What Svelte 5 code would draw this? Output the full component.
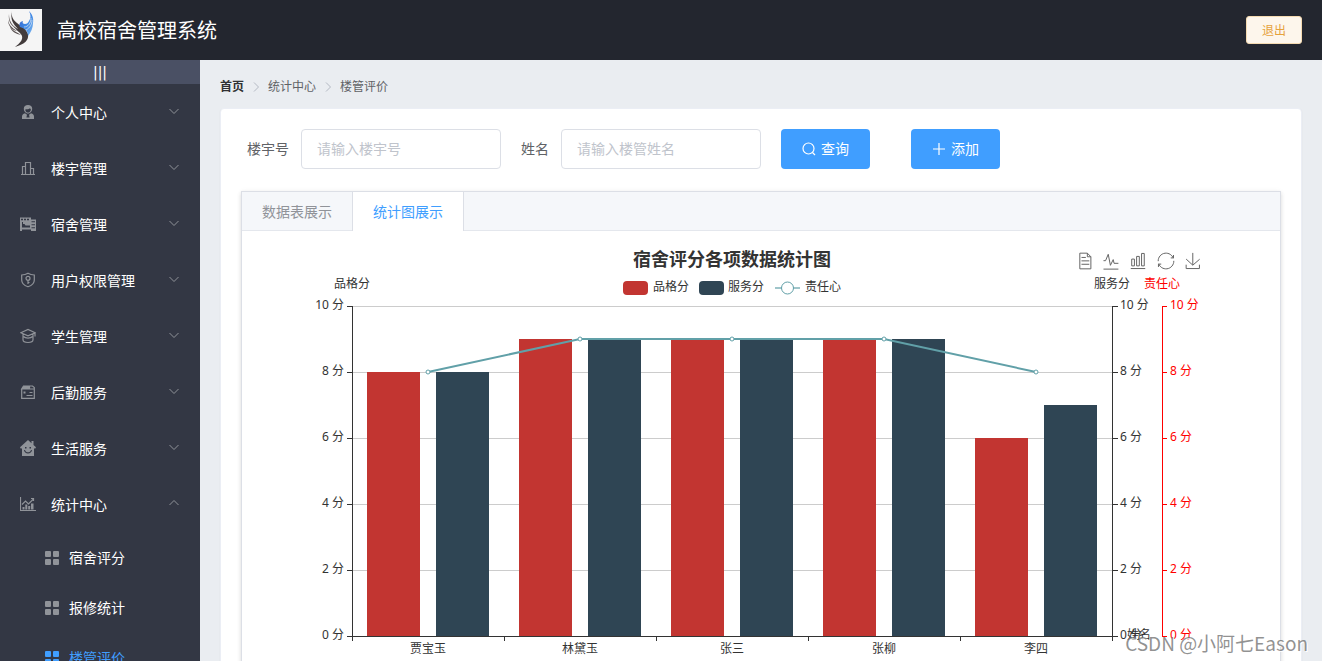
<script>
  const menus = [
    { label: '个人中心', icon: 'user' },
    { label: '楼宇管理', icon: 'building' },
    { label: '宿舍管理', icon: 'dorm' },
    { label: '用户权限管理', icon: 'shield' },
    { label: '学生管理', icon: 'student' },
    { label: '后勤服务', icon: 'logistics' },
    { label: '生活服务', icon: 'life' },
    {
      label: '统计中心',
      icon: 'stats',
      children: ['宿舍评分', '报修统计', '楼管评价']
    }
  ];
  const crumbs = ['统计中心', '楼管评价'];
  const tabs = ['数据表展示', '统计图展示'];

  let buildingNo = $state('');
  let managerName = $state('');
  let activeTab = $state('统计图展示');
  let activeItem = $state('楼管评价');

  const rows = [
    { name: '贾宝玉', character: 8, service: 8, duty: 8 },
    { name: '林黛玉', character: 9, service: 9, duty: 9 },
    { name: '张三', character: 9, service: 9, duty: 9 },
    { name: '张柳', character: 9, service: 9, duty: 9 },
    { name: '李四', character: 6, service: 7, duty: 8 }
  ];
  const ticks = [0, 2, 4, 6, 8, 10];
  const grid = { left: 95, right: 855, top: 60, bottom: 390 };
  const band = (grid.right - grid.left) / rows.length;
  const y = (v) => grid.bottom - (v * (grid.bottom - grid.top)) / 10;
  const cx = (i) => grid.left + band * (i + 0.5);
  const linePoints = rows.map((r, i) => `${cx(i)},${y(r.duty)}`).join(' ');

  const tools = [
    { x: 828, s: 0.28, title: '数据视图', d: 'M17.5,17.3H33M45.4,29.5h-28M11.5,2v56H51V14.8L38.4,2H11.5zM38.4,2.2v12.7H51M45.4,41.7h-28' },
    { x: 854, s: 0.29, title: '折线图', d: 'M4.1,28.9h7.1l9.3-22l7.4,38l9.7-19.7l3,12.8h14.9M4.1,58h51.4' },
    { x: 881, s: 0.27, title: '柱状图', d: 'M6.7,22.9h10V48h-10V22.9zM24.9,13h10v35h-10V13zM43.2,2h10v46h-10V2zM3.1,58h53.7' },
    { x: 909, s: 0.28, title: '还原', d: 'M47,18.9h9.8V8.7M56.3,20.1C52.1,9,40.5,0.6,26.8,2.1C12.6,3.7,1.6,16.2,2.1,30.6M13,41.1H3.1v10.2M3.7,39.9c4.2,11.1,15.8,19.5,29.5,18c14.2-1.6,25.2-14.1,24.7-28.5' },
    { x: 936, s: 0.27, title: '保存', d: 'M4.7,22.9L29.3,45.5L54.7,23.4M4.6,43.6L4.6,58L53.8,58L53.8,43.6M29.2,45.1L29.2,0' }
  ];
</script>

{#snippet menuIcon(name)}
  <svg class="icon" viewBox="0 0 16 16" aria-hidden="true">
    {#if name === 'user'}
      <path class="fill" d="M8 1C5.500 1 3.800 2.300 3.800 4.600c0 2.600 1.900 5 4.200 5s4.200-2.400 4.200-5C12.200 2.300 10.500 1 8 1zM5.200 5.400c2 0 4-.4 4.800-1.200l.9 1.200c-.2 1.800-1.400 3.200-2.900 3.200S5.400 7.200 5.200 5.400z" fill-rule="evenodd" />
      <path class="fill" d="M5 9.300C3 10 2 11 2 12.500V15h12v-2.500c0-1.500-1-2.500-3-3.200L9 10.800l.6 2.700H6.400L7 10.800z" />
    {:else if name === 'building'}
      <path d="M1 14.500h14M2.500 14V6.500h3M5.500 14V2.500h5V14M10.500 8.500h3V14" />
    {:else if name === 'dorm'}
      <path class="fill" d="M0 1.500h11v2h5v11.500h-5v-1.500H2V15H0zm1 1.200v1.500h2V2.700zm3 0v1.500h2V2.700zm3 0v1.500h2V2.700zM2 6v5.500h8V9.500H5.500L4.500 8H3V6zm9.500-.7v1h3.500v-1zm0 3v1h3.500v-1zm0 3v1h3.500v-1z" fill-rule="evenodd" />
    {:else if name === 'shield'}
      <path d="M8 1.300C6 2.500 4 3 1.700 3v5c0 3.500 2.800 5.700 6.300 6.800 3.500-1.100 6.300-3.300 6.300-6.800V3C12 3 10 2.500 8 1.300z" />
      <circle cx="8" cy="6.300" r="2" />
      <path d="M8 8.300v3.700M8 10.500h1.500" />
    {:else if name === 'student'}
      <path d="M.8 4.700 8 1.500l7.200 3.200L8 7.800zM3 6.300v5.500c0 1.500 2 2.700 5 2.700s5-1.200 5-2.700V6.300M3.500 8.500c1 1.200 2.500 1.600 4.500 1.600s3.500-.4 4.500-1.600M15 5v3.500" />
    {:else if name === 'logistics'}
      <path d="M1.700 5V14.300h12.600V3.500L12.500 2H3.500L1.700 5h12.600M9.500 2v3M9.500 8.500h3M6.500 11.500h6" />
      <path class="fill" d="M3.500 2h6v3H1.700zM3.500 7.500h2v2h-2z" />
    {:else if name === 'life'}
      <path class="fill" d="M8 0 0 7.200l.9 1.600L2 8.300V16h12V8.300l1.100.5.9-1.600L13.500 5V1h-2v2.200zM5 7h1.500v1.600H5zm4.500 0H11v1.600H9.500zM4 10h1c.4 1.600 1.500 2.300 3 2.300s2.600-.7 3-2.300h1c-.3 2.300-1.800 3.400-4 3.400S4.300 12.300 4 10z" fill-rule="evenodd" />
    {:else}
      <path d="M.5 1v13.500H16M2 8.500l3.500-3.500 3 3 5-5M11 2.500h2.500V5" />
      <path class="fill" d="M2.500 11h2v2.500h-2zM5.300 8.500h2v5h-2zM8.200 10h2v3.500h-2zM11 7.500h2.500v6H11z" />
    {/if}
  </svg>
{/snippet}

<div class="page">
  <header>
    <div class="brand">
      <svg class="logo" viewBox="0 0 42 42" aria-hidden="true">
        <defs>
          <linearGradient id="blue" x1="0" y1="0" x2="1" y2="1">
            <stop offset="0" stop-color="#3a5cc0" />
            <stop offset=".5" stop-color="#3c86e4" />
            <stop offset="1" stop-color="#86bdf0" />
          </linearGradient>
        </defs>
        <rect width="42" height="42" fill="#f5f5f5" />
        <path fill="#423b3b" d="M12 2c-1 5 1 9 5 12 4 3 9 6 11 11 1 6-3 10-13 13 5-4 8-7 7-11-1-3-6-6-9-10 2 1 3 2 5 3-5-5-8-10-6-18z" />
        <path fill="#5a5252" d="M9 5c0 6 2 10 7 14-5-2-8-7-7-14zM8 11c1 5 4 8 9 11-5-1-9-5-9-11zM10 18c3 4 7 5 11 8-5-1-9-3-11-8z" />
        <path fill="url(#blue)" d="M29 2c2 4 2 7 0 10-1 2-2 3-4 3-2 0-3-1-2-3-4 1-4 4-3 6 4 1 8 3 8 9 3-4 5-8 5-13 1-5-1-9-4-12z" />
        <path fill="none" stroke="#f5f5f5" stroke-width=".6" d="M24 18c4 0 7-4 7-9M26 21c4-2 6-6 6-10" />
      </svg>
      <h1>高校宿舍管理系统</h1>
    </div>
    <button class="logout" type="button">退出</button>
  </header>

  <div class="body">
    <aside>
      <button class="toggle" type="button">|||</button>
      <nav>
        {#each menus as menu}
          <button class="menu" type="button" aria-expanded={!!menu.children}>
            {@render menuIcon(menu.icon)}
            <span>{menu.label}</span>
            <svg class="arrow" class:up={menu.children} viewBox="0 0 12 12" aria-hidden="true"><path d="M1.500 4 6 8.500 10.500 4" /></svg>
          </button>
          {#if menu.children}
            {#each menu.children as child}
              <button class="sub" class:active={child === activeItem} type="button" onclick={() => (activeItem = child)}>
                <svg viewBox="0 0 14 14" aria-hidden="true">
                  <rect width="6" height="6" rx="1" /><rect x="8" width="6" height="6" rx="1" />
                  <rect y="8" width="6" height="6" rx="1" /><rect x="8" y="8" width="6" height="6" rx="1" />
                </svg>
                <span>{child}</span>
              </button>
            {/each}
          {/if}
        {/each}
      </nav>
    </aside>

    <main>
      <nav class="crumbs" aria-label="breadcrumb">
        <a href="#home">首页</a>
        {#each crumbs as crumb}
          <svg viewBox="0 0 12 12" aria-hidden="true"><path d="M4 1.500 8.500 6 4 10.500" /></svg>
          <span>{crumb}</span>
        {/each}
      </nav>

      <section class="card">
        <form onsubmit={(e) => e.preventDefault()}>
          <label for="building">楼宇号</label>
          <input id="building" type="text" placeholder="请输入楼宇号" bind:value={buildingNo} />
          <label for="manager">姓名</label>
          <input id="manager" type="text" placeholder="请输入楼管姓名" bind:value={managerName} />
          <button class="primary" type="submit">
            <svg viewBox="0 0 14 14" aria-hidden="true"><circle cx="6.500" cy="6.500" r="5.500" /><path d="m10.500 10.500 2.500 2.500" /></svg>
            <span>查询</span>
          </button>
          <button class="primary add" type="button">
            <svg viewBox="0 0 14 14" aria-hidden="true"><path d="M7 1v12M1 7h12" /></svg>
            <span>添加</span>
          </button>
        </form>

        <div class="tabs">
          <div class="tab-head" role="tablist">
            {#each tabs as tab}
              <button class="tab" class:active={tab === activeTab} role="tab" aria-selected={tab === activeTab} type="button" onclick={() => (activeTab = tab)}>{tab}</button>
            {/each}
          </div>
          <div class="tab-body" role="tabpanel">
            <svg class="chart" viewBox="0 0 950 450" role="img" aria-labelledby="chart-title">
              <text id="chart-title" class="title" x="475" y="20" text-anchor="middle">宿舍评分各项数据统计图</text>

              <g class="tools">
                {#each tools as t}
                  <path d={t.d} transform="translate({t.x} 15) scale({t.s}) translate(-30 -30)" aria-label={t.title} />
                {/each}
              </g>

              <rect class="red" x="366" y="35" width="25" height="14" rx="4" />
              <text x="396" y="45">品格分</text>
              <rect class="navy" x="442" y="35" width="25" height="14" rx="4" />
              <text x="471" y="45">服务分</text>
              <path class="legend-line" d="M518 42h25" />
              <circle class="legend-dot" cx="530.5" cy="42" r="6" />
              <text x="548" y="45">责任心</text>

              <text x="95" y="42" text-anchor="middle">品格分</text>
              <text x="855" y="42" text-anchor="middle">服务分</text>
              <text class="hot" x="905" y="42" text-anchor="middle">责任心</text>

              {#each ticks as t}
                {#if t > 0}<path class="split" d="M{grid.left} {y(t) + 0.5}H{grid.right}" />{/if}
              {/each}

              {#each rows as r, i}
                <rect class="red" x={cx(i) - 61} y={y(r.character)} width="53" height={grid.bottom - y(r.character)} />
                <rect class="navy" x={cx(i) + 8} y={y(r.service)} width="53" height={grid.bottom - y(r.service)} />
                <text x={cx(i)} y="407" text-anchor="middle">{r.name}</text>
              {/each}

              {#each ticks as t}
                <path class="axis" d="M90 {y(t) + 0.5}h5M855 {y(t) + 0.5}h6" />
                <path class="axis hot-axis" d="M905 {y(t) + 0.5}h5" />
                <text x="87" y={y(t) + 3} text-anchor="end">{t} 分</text>
                <text x="863" y={y(t) + 3}>{t} 分</text>
                <text class="hot" x="913" y={y(t) + 3}>{t} 分</text>
              {/each}
              <path class="axis" d="M95.500 60V391M855.500 60V391M95 390.500H856" />
              <path class="axis hot-axis" d="M905.500 60V391" />
              {#each [0, 1, 2, 3, 4, 5] as i}
                <path class="axis" d="M{grid.left + band * i + 0.5} 390v5" />
              {/each}
              <text x="870" y="393">姓名</text>

              <polyline class="duty" points={linePoints} />
              {#each rows as r, i}
                <circle class="dot" cx={cx(i)} cy={y(r.duty)} r="2" />
              {/each}
            </svg>
          </div>
        </div>
      </section>
    </main>
  </div>
  <div class="watermark">CSDN @小阿七Eason</div>
</div>

<style>
  :global(body) { margin: 0; }
  .page, .page * { box-sizing: border-box; }
  .page {
    position: relative;
    display: flex;
    flex-direction: column;
    height: 100vh;
    overflow: hidden;
    font-family: "Noto Sans CJK SC", "Noto Sans", sans-serif;
    font-size: 14px;
  }
  button { font-family: inherit; cursor: pointer; }
  header {
    display: flex;
    flex: none;
    align-items: center;
    justify-content: space-between;
    height: 60px;
    padding-right: 20px;
    background: #23262f;
  }
  .brand { display: flex; align-items: center; gap: 15px; }
  .logo { width: 42px; height: 42px; }
  h1 { margin: 0; color: #fff; font-size: 20px; font-weight: 400; line-height: 28px; }
  .logout {
    width: 56px;
    height: 28px;
    padding: 0 0 2px;
    border: 1px solid #f5dab1;
    border-radius: 3px;
    background: #fdf6ec;
    color: #e6a23c;
    font-size: 12px;
  }
  .body { display: flex; flex: 1; min-height: 0; }
  aside { flex: none; width: 200px; overflow: hidden; background: #333744; }
  .toggle {
    display: block;
    width: 100%;
    height: 24px;
    padding: 0;
    border: 0;
    background: #4a5064;
    color: #fff;
    font-family: "DejaVu Sans", sans-serif;
    font-size: 14px;
    line-height: 24px;
  }
  .menu, .sub {
    display: flex;
    align-items: center;
    width: 100%;
    border: 0;
    background: none;
    color: #fff;
    font-size: 14px;
    text-align: left;
  }
  .menu { gap: 15px; height: 56px; padding: 0 20px; }
  .menu span { flex: 1; }
  .icon { width: 16px; height: 16px; }
  .icon path, .icon circle { fill: none; stroke: #909399; stroke-width: 1.2; }
  .icon .fill { fill: #909399; stroke: none; }
  .arrow { width: 12px; height: 12px; margin-bottom: 3px; }
  .arrow path { fill: none; stroke: #909399; }
  .arrow.up { transform: rotate(180deg); }
  .sub { gap: 10px; height: 50px; padding: 2px 20px 0 45px; }
  .sub span { padding-bottom: 2px; }
  .sub svg { width: 14px; height: 14px; fill: #909399; }
  .sub.active { color: #409eff; }
  .sub.active svg { fill: #409eff; }

  main { flex: 1; min-width: 0; padding: 20px; overflow: hidden; background: #eaedf1; }
  .crumbs {
    display: flex;
    align-items: center;
    gap: 6px;
    height: 13px;
    margin-bottom: 15px;
    color: #606266;
    font-size: 12px;
    line-height: 13px;
  }
  .crumbs a, .crumbs span { padding-bottom: 2px; }
  .crumbs a { color: #303133; font-weight: 700; text-decoration: none; }
  .crumbs svg { width: 12px; height: 12px; }
  .crumbs path { fill: none; stroke: #b4b9c3; }
  .card {
    padding: 20px;
    border: 1px solid #ebeef5;
    border-radius: 4px;
    background: #fff;
    box-shadow: 0 1px 1px rgba(0, 0, 0, .15);
  }
  form { display: flex; margin-bottom: 22px; }
  label {
    flex: none;
    width: 60px;
    padding-right: 12px;
    color: #606266;
    line-height: 38px;
    text-align: right;
  }
  input {
    width: 200px;
    height: 40px;
    padding: 0 15px 2px;
    border: 1px solid #dcdfe6;
    border-radius: 4px;
    outline: none;
    color: #606266;
    font-family: inherit;
    font-size: 14px;
  }
  input::placeholder { color: #c0c4cc; }
  .primary {
    display: flex;
    align-items: center;
    gap: 5px;
    height: 40px;
    margin-left: 20px;
    padding: 0 21px;
    border: 0;
    border-radius: 4px;
    background: #409eff;
    color: #fff;
    font-size: 14px;
    white-space: nowrap;
  }
  .primary span { padding-bottom: 2px; }
  .primary.add { margin-left: 41px; }
  .primary svg { width: 14px; height: 14px; fill: none; stroke: #fff; stroke-width: 1.2; }

  .tabs {
    border: 1px solid #dcdfe6;
    background: #fff;
    box-shadow: 0 2px 4px rgba(0, 0, 0, .12), 0 0 6px rgba(0, 0, 0, .04);
  }
  .tab-head { display: flex; height: 39px; border-bottom: 1px solid #e4e7ed; background: #f5f7fa; }
  .tab {
    height: 39px;
    padding: 0 20px 2px;
    border: 0;
    background: none;
    color: #909399;
    font-size: 14px;
  }
  .tab.active {
    border-right: 1px solid #dcdfe6;
    border-left: 1px solid #dcdfe6;
    background: #fff;
    color: #409eff;
  }
  .tab-body { padding: 15px; }
  .chart {
    display: block;
    width: 950px;
    max-width: 100%;
    font-family: "Noto Sans", "Noto Sans CJK SC", sans-serif;
  }
  .chart text { fill: #333; font-size: 12px; font-weight: 400; }
  .chart .title { font-size: 18px; font-weight: 700; }
  .chart .hot { fill: #f00; }
  .tools path { fill: none; stroke: #666; vector-effect: non-scaling-stroke; }
  .red { fill: #c23531; }
  .navy { fill: #2f4554; }
  .split { stroke: #ccc; }
  .axis { fill: none; stroke: #333; }
  .axis.hot-axis { stroke: #f00; }
  .duty { fill: none; stroke: #61a0a8; stroke-width: 2; }
  .dot { fill: #fff; stroke: #61a0a8; }
  .legend-line { stroke: #61a0a8; stroke-width: 2; opacity: .6; }
  .legend-dot { fill: #fff; stroke: #61a0a8; }

  .watermark {
    position: absolute;
    right: 14px;
    bottom: 4px;
    color: rgba(110, 110, 110, .75);
    font-size: 19px;
    line-height: 28px;
    text-shadow: 1px 1px 0 #fff;
    pointer-events: none;
  }
</style>
